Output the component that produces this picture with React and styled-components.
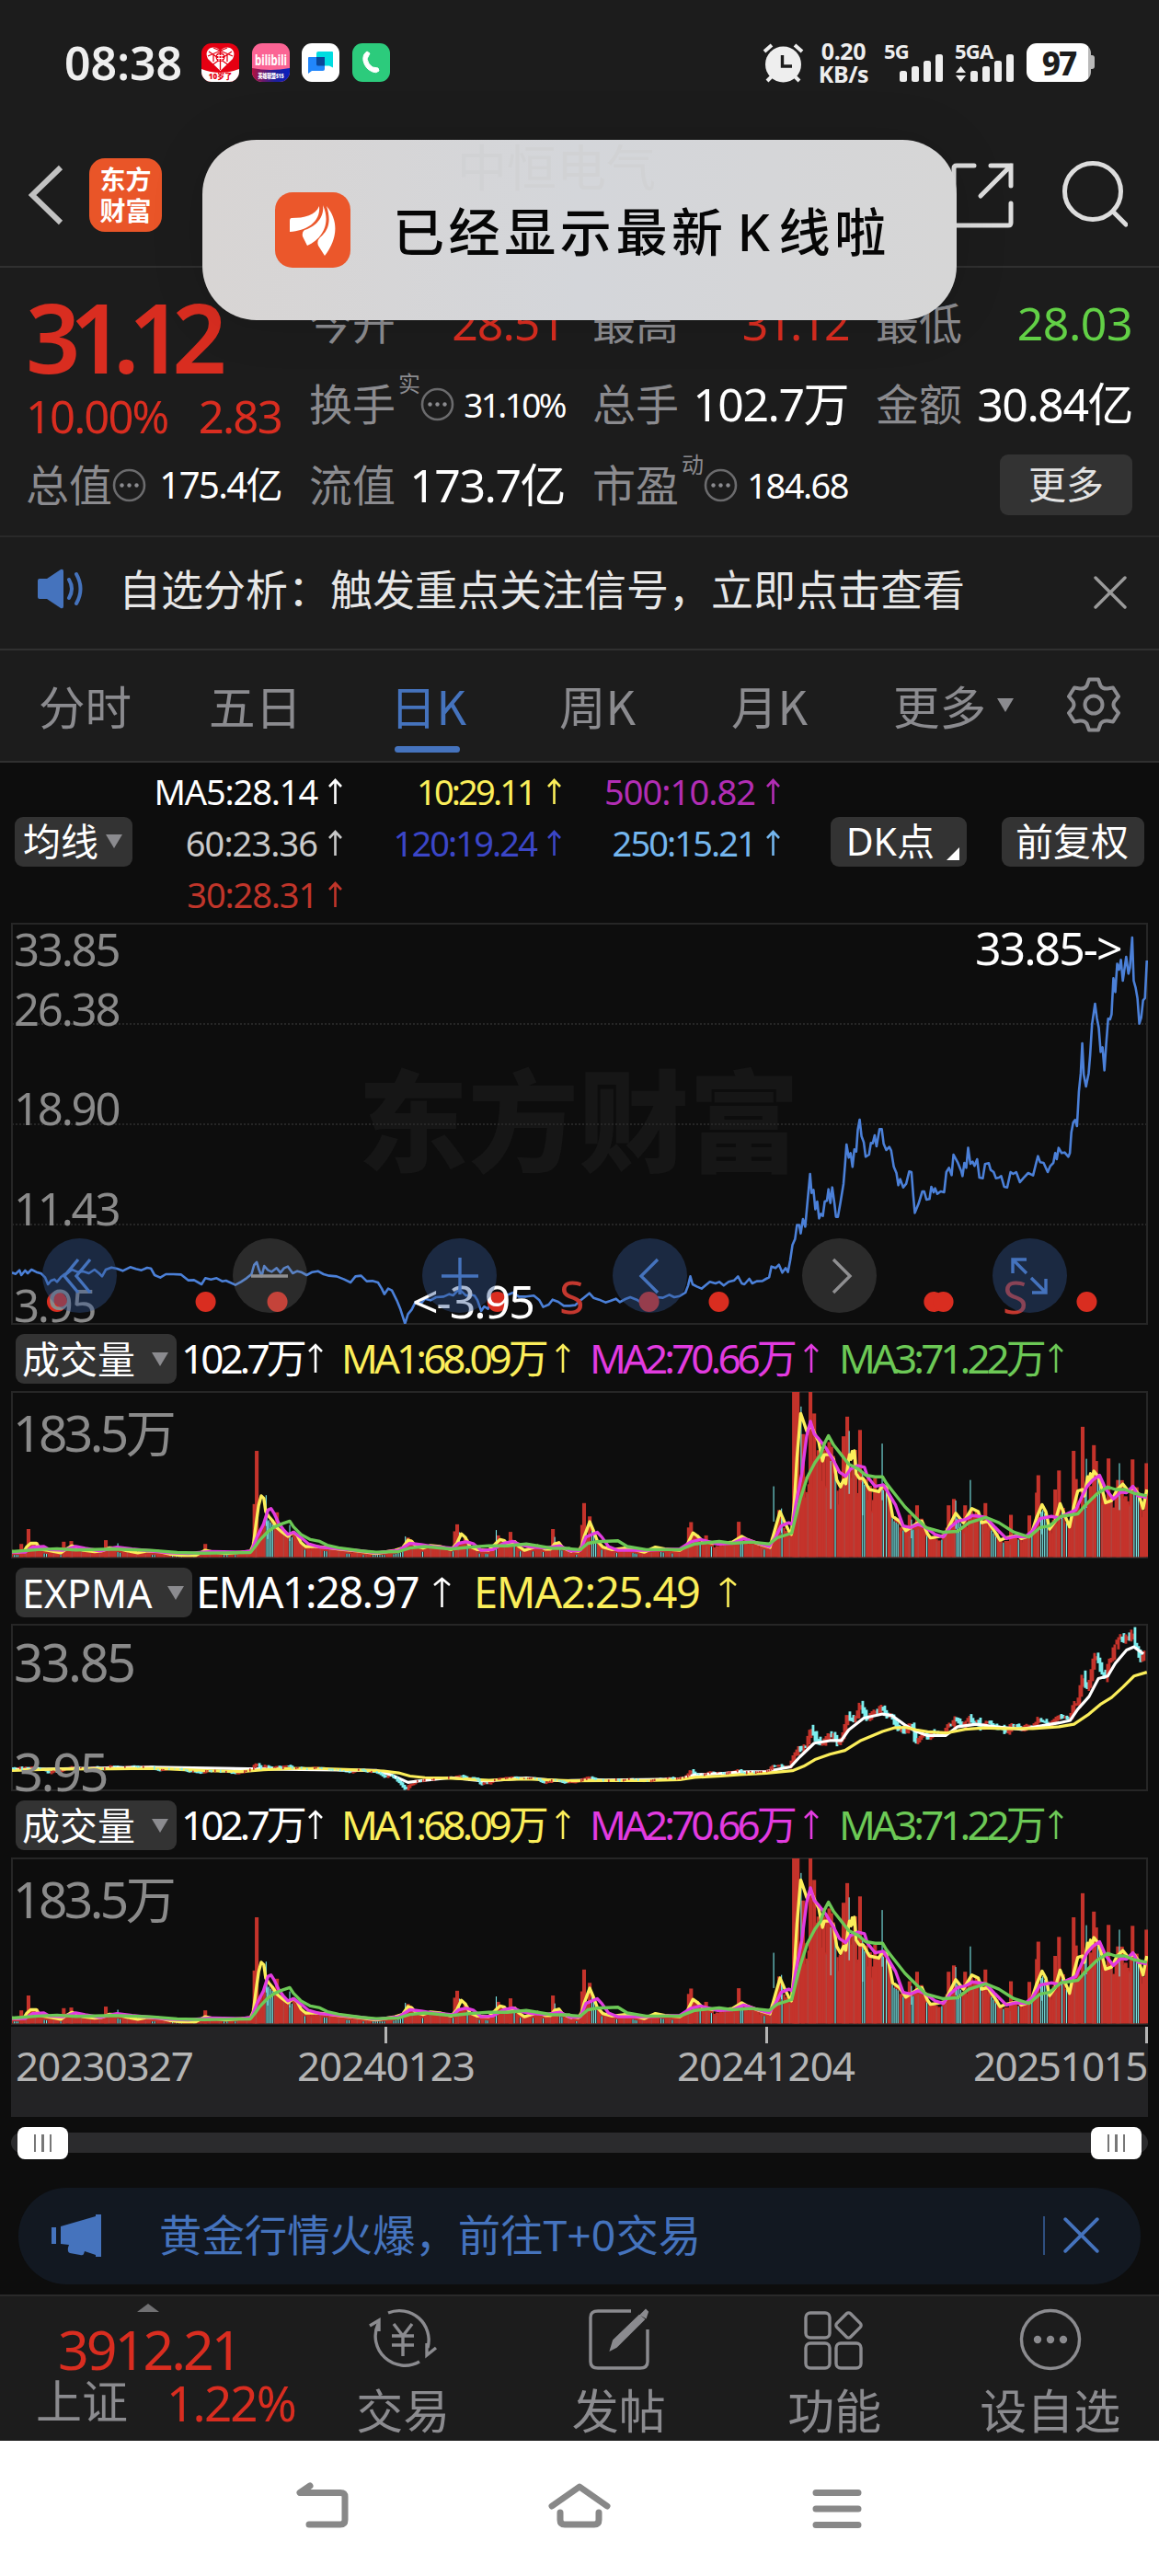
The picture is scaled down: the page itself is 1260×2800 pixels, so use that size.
import React from 'react';
import styled, { createGlobalStyle } from 'styled-components';

const GlobalStyle = createGlobalStyle`
  * {
    box-sizing: border-box;
  }

  body {
    margin: 0;
    background: #0d0d0d;
    font-family: 'Noto Sans', 'Noto Sans CJK SC', sans-serif;
  }

  svg {
    display: block;
    flex: none;
  }
`;

const colors = {
  red: '#d92d20',
  bar: '#c4332b',
  green: '#62d046',
  blue: '#4573bd',
  yellow: '#fbee5a',
  pink: '#e23be0',
  lime: '#6cc956',
  cyan: '#7deeee',
  label: '#8b8b8f',
};

/* ---------- chart data: the second half is stored from its own origin ---------- */

const HALF = 1519;
const parse = (text, shift = 0) =>
  text
    .trim()
    .split(/\s+/)
    .map((pair) => pair.split(',').map(Number))
    .map(([x, y]) => [x + shift, y]);
const series = (first, second) => [...parse(first), ...parse(second, HALF)];
const toPoints = (list) => list.map((p) => p.join(',')).join(' ');

const price = series(
  `30,1210 40,1214 50,1202 55,1218 65,1203 72,1212 82,1200 95,1208 108,1213 118,1225 126,1248 134,1236 143,1232 150,1240
  160,1225 170,1215 178,1212 190,1200 205,1208 220,1206 235,1212 250,1200 262,1212 270,1222 280,1200 295,1193 310,1197
  325,1204 345,1192 360,1198 375,1202 390,1194 400,1196 410,1218 425,1226 440,1215 460,1215 480,1216 500,1235 515,1234
  535,1248 545,1228 560,1232 575,1228 590,1238 600,1236 625,1250 640,1240 655,1228 668,1215 675,1185 682,1176 688,1200
  695,1222 702,1188 712,1202 722,1207 735,1195 745,1210 755,1195 765,1190 778,1212 790,1205 800,1208 815,1218 830,1208
  845,1205 860,1215 875,1220 895,1222 915,1232 932,1242 945,1222 960,1220 975,1238 990,1237 1005,1242 1015,1262
  1022,1280 1032,1262 1042,1268 1055,1300 1065,1330 1077,1376 1085,1345 1095,1330 1105,1305 1120,1310 1130,1295
  1145,1300 1160,1290 1180,1288 1195,1280 1205,1284 1216,1270 1225,1268 1240,1285 1250,1282 1262,1285 1270,1300
  1280,1335 1288,1320 1298,1328 1310,1300 1325,1290 1345,1285 1365,1275 1380,1288 1400,1288 1420,1285 1435,1300
  1445,1322 1460,1314 1470,1298 1485,1305 1500,1318 1515,1318 1530,1316 1545,1300`,
  `34,1292 49,1277 60,1292 75,1298 92,1307 105,1302 120,1295 130,1306 145,1296 158,1290 175,1298 185,1306 200,1310
  215,1305 228,1290 245,1292 262,1282 275,1290 290,1286 305,1275 312,1252 318,1222 324,1248 335,1255 348,1262 358,1252
  370,1240 385,1245 395,1240 407,1252 420,1240 435,1235 445,1222 455,1245 462,1248 475,1230 483,1245 495,1238 510,1237
  520,1230 528,1225 534,1190 545,1195 554,1184 563,1210 572,1195 578,1208 584,1170 590,1120 597,1100 602,1055 608,1055
  612,1082 618,1035 624,1060 630,980 637,888 641,950 646,940 651,1003 656,978 661,1033 666,1018 671,1025 676,978
  682,975 686,938 691,983 696,932 702,985 706,1028 711,1028 718,980 726,920 730,860 734,792 740,835 745,820 750,865
  755,808 760,815 764,745 769,711 774,765 780,785 785,832 794,825 799,787 804,788 809,762 814,798 822,742 828,742
  833,790 840,810 848,800 853,812 860,865 867,885 872,925 877,905 885,932 893,920 901,880 907,882 912,960 916,1015
  926,985 936,945 941,945 947,972 955,970 960,930 966,948 970,935 976,953 985,945 994,948 1000,882 1007,868 1014,892
  1019,825 1030,850 1040,880 1043,895 1048,852 1053,868 1058,803 1064,855 1070,848 1075,862 1082,840 1088,900 1097,902
  1103,856 1113,853 1118,875 1126,882 1132,902 1140,900 1146,895 1154,930 1162,932 1171,882 1178,888 1186,882 1196,915
  1205,902 1218,885 1231,893 1238,858 1244,830 1250,850 1259,852 1270,882 1277,862 1285,852 1290,820 1294,840 1299,803
  1307,820 1315,818 1325,832 1329,820 1333,752 1338,720 1343,712 1348,732 1353,620 1358,560 1362,462 1366,565 1372,603
  1379,560 1383,500 1388,400 1396,333 1401,380 1406,412 1411,490 1416,475 1421,550 1426,460 1431,382 1436,384 1440,368
  1445,250 1450,295 1455,203 1460,222 1465,190 1470,258 1479,180 1485,235 1489,215 1495,117 1499,258 1504,280 1509,315
  1514,398 1519,378 1524,322 1529,315 1534,192`
);

const volumeMa1 = series(
  `30,716 45,718 62,715 70,700 80,690 95,690 105,708 125,712 160,720 175,708 190,698 205,705 220,712 250,716 270,714
  290,704 310,705 330,712 365,720 390,714 420,716 450,724 480,728 520,728 545,712 560,716 600,722 640,718 665,715
  673,695 680,630 687,570 694,540 701,548 706,590 714,605 725,620 735,640 750,655 765,668 780,655 790,665 800,688
  812,700 835,700 860,702 900,708 950,714 1000,722 1050,712 1070,705 1085,680 1095,684 1105,698 1125,705 1145,697
  1170,700 1200,710 1215,690 1227,660 1238,672 1250,700 1270,710 1300,712 1315,695 1330,678 1342,682 1352,696
  1370,685 1380,700 1395,712 1415,705 1430,698 1450,708 1465,708 1475,692 1487,688 1497,704 1520,715`,
  `0,712 20,715 28,700 35,670 50,622 60,650 70,682 85,702 110,710 150,704 195,718 225,702 250,708 290,712 308,698
  325,657 338,668 350,682 380,690 405,690 430,686 455,668 470,678 500,692 530,703 545,640 557,590 568,620 580,650
  587,662 595,560 602,420 612,280 618,300 628,335 640,318 650,345 660,370 670,430 675,410 690,410 700,425 708,490
  718,512 726,490 732,502 738,435 742,410 746,425 749,400 752,420 755,398 760,470 768,485 778,485 795,520 820,527
  828,510 840,512 850,560 857,605 875,620 892,650 905,640 920,628 935,620 950,660 958,673 975,670 995,665 1010,630
  1025,595 1045,625 1068,580 1085,590 1095,625 1110,620 1130,655 1143,680 1160,672 1190,665 1200,675 1225,665
  1240,610 1255,568 1265,590 1275,645 1290,620 1303,565 1315,600 1328,638 1340,570 1350,525 1362,520 1368,540
  1376,480 1380,495 1384,470 1388,485 1393,462 1405,480 1415,520 1424,562 1440,555 1455,520 1470,503 1485,525
  1500,515 1512,535 1524,580 1534,520`
);

const volumeMa2 = series(
  `30,718 65,718 85,702 115,700 130,710 165,712 200,700 225,706 265,714 310,702 350,708 400,714 450,720 500,722
  560,716 640,718 668,714 682,672 700,630 712,585 720,580 728,595 740,625 752,645 765,662 780,655 800,672 820,692
  850,702 900,707 960,714 1000,720 1060,712 1090,690 1120,694 1150,700 1205,706 1220,690 1240,685 1260,692 1280,712
  1310,710 1340,690 1365,684 1385,695 1415,702 1450,705 1490,698 1518,714`,
  `0,714 25,712 40,670 70,655 82,670 100,700 125,712 200,712 290,708 320,685 345,678 390,692 430,690 460,675 500,690
  528,700 545,670 560,635 580,625 590,630 600,560 615,470 628,350 638,305 648,345 660,360 680,390 700,430 715,465
  732,478 745,455 765,445 782,450 790,480 810,510 832,505 845,530 865,570 885,635 905,640 925,630 945,640 970,662
  992,670 1010,640 1030,620 1050,615 1070,602 1105,608 1130,640 1160,675 1185,668 1210,670 1230,650 1250,612
  1280,605 1300,610 1325,595 1345,585 1360,545 1375,510 1390,490 1408,475 1425,520 1445,550 1465,528 1480,530
  1497,510 1510,540 1534,545`
);

const volumeMa3 = series(
  `30,716 100,710 150,707 200,711 300,708 400,712 470,719 540,721 600,720 665,719 678,700 690,680 710,655 730,638
  750,628 770,620 780,638 800,662 825,678 850,684 870,696 900,704 960,714 1000,718 1060,716 1090,705 1130,700
  1200,708 1250,702 1300,698 1350,698 1400,692 1430,698 1470,706 1515,706`,
  `0,708 25,710 45,690 70,685 125,682 150,700 200,710 290,710 330,692 395,684 430,690 480,686 528,692 550,672
  588,658 600,600 612,545 630,480 650,435 665,410 675,375 686,350 700,380 720,410 740,440 765,455 785,475 810,480
  830,480 840,500 860,530 890,575 915,605 945,640 990,655 1030,652 1060,625 1105,608 1140,625 1180,655 1220,670
  1250,640 1275,635 1305,605 1350,597 1370,570 1400,535 1430,512 1450,520 1475,520 1500,532 1534,540`
);

const redSpikes = series(
  `55,692 74,645 168,685 188,683 280,680 545,692 676,566 682,398 736,592 1210,652 1216,630 1085,672 1358,654
  1325,665 1471,645`,
  `30,632 35,563 50,605 314,640 320,623 447,622 360,665 594,212 599,212 604,212 638,212 648,280 618,345 688,370
  726,352 736,290 757,395 770,332 810,485 902,600 922,570 1006,570 1020,550 1050,570 1104,563 1172,600 1221,602
  1241,530 1245,475 1290,520 1300,460 1339,398 1345,487 1363,322 1393,380 1399,430 1432,422 1457,490 1496,425
  1533,437 555,585`
);

const thinSpikes = series(
  `312,690 707,538 711,620 770,632 1078,668 1222,655 1320,648 1476,670`,
  `540,510 561,580 613,258 692,430 741,335 777,470 829,375 907,615 1025,555 1064,490 1255,590 1373,423 1461,437`
);

const fallingDays = [
  ...[36, 41, 46, 116, 122, 160, 312, 318, 404, 410, 458, 468, 475, 482, 515, 595, 603, 625, 709, 714, 719, 724, 770,
    776, 810, 862, 868, 922, 928, 966, 992, 998, 1004, 1010, 1016, 1022, 1047, 1053, 1059, 1065, 1071, 1124, 1205,
    1243, 1275, 1292, 1297, 1320, 1368, 1384, 1418, 1445, 1490, 1495],
  ...[15, 56, 61, 66, 82, 122, 165, 170, 175, 240, 246, 270, 344, 374, 452, 457, 515, 562, 704, 777, 782, 832, 840,
    856, 861, 866, 871, 885, 908, 912, 948, 988, 1028, 1033, 1038, 1090, 1120, 1125, 1131, 1152, 1192, 1228, 1252,
    1257, 1262, 1268, 1308, 1320, 1370, 1403, 1408, 1500, 1506, 1511].map((x) => x + HALF),
];

const emaFast = series(
  `30,1406 400,1398 700,1404 1000,1408 1040,1422 1085,1446 1110,1442 1200,1431 1290,1442 1400,1432 1500,1442`,
  `0,1440 290,1436 330,1422 400,1418 450,1413 520,1412 585,1397 610,1365 648,1322 690,1314 720,1314 740,1280 780,1243
  830,1230 855,1235 890,1265 920,1285 950,1298 998,1298 1030,1270 1080,1262 1130,1270 1200,1278 1250,1268 1300,1258
  1330,1250 1350,1215 1380,1175 1405,1118 1430,1110 1450,1070 1480,1028 1500,1018 1525,1040`
);

const emaSlow = series(
  `30,1408 150,1404 300,1403 400,1402 440,1403 530,1408 640,1412 700,1406 780,1402 850,1402 950,1407 1020,1410
  1060,1416 1090,1426 1130,1431 1200,1433 1300,1439 1400,1435 1500,1440`,
  `0,1441 100,1440 200,1440 290,1437 330,1430 400,1426 450,1421 520,1417 590,1409 620,1395 650,1374 690,1357 730,1345
  770,1315 830,1285 860,1274 890,1272 920,1280 950,1286 1000,1290 1050,1278 1100,1274 1150,1276 1230,1276 1300,1270
  1340,1262 1380,1230 1410,1200 1440,1178 1470,1145 1500,1110 1534,1098`
);

const valueAt = (list, x) => {
  const i = list.findIndex((p) => p[0] >= x);
  if (i < 1) return i === 0 ? list[0][1] : list[list.length - 1][1];
  const [x0, y0] = list[i - 1];
  const [x1, y1] = list[i];
  return y0 + ((y1 - y0) * (x - x0)) / (x1 - x0 || 1);
};

const jitter = (n) => {
  const v = Math.sin(n * 12.9898) * 43758.5453;
  return v - Math.floor(v);
};

const FLOOR = 733;
const volumeBars = Array.from({ length: 616 }, (_, i) => {
  const x = 32 + i * 4.9;
  const mean = FLOOR - Math.max(valueAt(volumeMa1, x), valueAt(volumeMa3, x) - 30);
  return { x, y: FLOOR - mean * (0.68 + jitter(i) * 0.42) };
});

const candles = Array.from({ length: 616 }, (_, i) => {
  const x = 32 + i * 4.9;
  const map = (v) => 1470 - (1376 - v) * 0.413;
  const open = map(valueAt(price, x - 8));
  const close = map(valueAt(price, x));
  const wick = 2 + jitter(i + 9) * (x > 2100 ? 16 : 5);
  return {
    x,
    top: Math.max(Math.min(open, close) - wick / 2, 949),
    height: Math.abs(open - close) + wick,
    up: close < open || (close === open && jitter(i) > 0.4),
  };
});

/* ---------- shared parts ---------- */

const Num = styled.span`
  font-size: ${({ $size }) => $size}px;
  font-weight: ${({ $weight }) => $weight || 400};
  letter-spacing: ${({ $ls }) => ($ls === undefined ? -0.05 : $ls)}em;
  color: ${({ $color }) => $color || '#fff'};
  line-height: 1;
  white-space: nowrap;
`;

const Caret = styled.i`
  border: ${({ $w }) => ($w || 18) / 2}px solid transparent;
  border-top: ${({ $h }) => $h || 15}px solid ${colors.label};
  border-bottom: 0;
`;

const UpArrow = ({ w = 15, h = 28, gap = 12 }) => (
  <svg width={w + gap} height={h} viewBox={`${-gap} 0 ${w + gap} ${h}`} fill="none" stroke="currentColor" strokeWidth="2.6">
    <path d={`M${w / 2} ${h}V2M1 9L${w / 2} 2L${w - 1} 9`} />
  </svg>
);

const Cross = ({ size, color }) => (
  <svg width={size} height={size} viewBox="0 0 36 36" stroke={color} strokeWidth="3.4" strokeLinecap="round">
    <path d="M2 2L34 34M34 2L2 34" />
  </svg>
);

const Screen = styled.main`
  position: relative;
  width: 1260px;
  height: 2800px;
  overflow: hidden;
  display: flex;
  flex-direction: column;
  background: #0d0d0d;
  color: #fff;
`;

/* ---------- status bar ---------- */

const StatusBar = styled.header`
  height: 140px;
  flex: none;
  padding: 47px 70px 0 70px;
  display: flex;
  align-items: flex-start;
  justify-content: space-between;
  background: #1c1c1c;
`;

const StatusLeft = styled.div`
  display: flex;
  align-items: center;
  height: 42px;
`;

const Clock = styled(Num)`
  width: 149px;
`;

const AppIcons = styled.div`
  display: flex;
  gap: 13.5px;
`;

const StatusRight = styled.div`
  display: flex;
  height: 43px;
  color: #eee;
`;

const Speed = styled.div`
  width: 58px;
  margin-left: 14px;
  display: flex;
  flex-direction: column;
  align-items: center;
  font-size: 25px;
  font-weight: 700;
  line-height: 25px;
  margin-top: -4px;
  letter-spacing: -0.4px;
`;

const Signal = styled.div`
  width: ${({ $w }) => $w}px;
  margin-left: ${({ $gap }) => $gap}px;
  height: 42px;
  display: flex;
  flex-direction: column;
  font-size: 22px;
  font-weight: 700;
  line-height: 16px;
  letter-spacing: -0.8px;
  svg {
    align-self: flex-end;
    margin-top: -4px;
  }
`;

const Battery = styled.div`
  width: 70px;
  height: 42px;
  margin-left: 13px;
  border-radius: 11px;
  background: linear-gradient(90deg, #fff 67px, #b9b9b9 67px);
  color: #1c1c1c;
  display: flex;
  align-items: center;
  justify-content: center;
  font-size: 35px;
  font-weight: 800;
  letter-spacing: -2px;
  line-height: 1;
`;

const BatteryTip = styled.div`
  width: 4px;
  height: 15px;
  margin-top: 13px;
  border-radius: 0 3px 3px 0;
  background: #b9b9b9;
`;

const HeartApp = () => (
  <svg width="41" height="42" viewBox="0 0 41 42">
    <rect width="41" height="42" rx="11" fill="#e60012" />
    <path d="M0 28Q20 36 41 28V31A11 11 0 0 1 30 42H11A11 11 0 0 1 0 31Z" fill="#fff" />
    <path d="M20.500 30L7 17Q3 9 10 5Q16 3 20.500 8Q25 3 31 5Q38 9 34 17Z" fill="#fff" />
    <path d="M8 9L30 24M13 5L34 14M33 9L11 24M28 5L7 14M20.500 9V29M13 12V20M28 12V20" stroke="#e60012" strokeWidth="1.300" />
    <circle cx="20.500" cy="15" r="5" fill="#e60012" />
    <path d="M17 13.500H24M17 16.500H24M19 11.500V19M22 11.500V19" stroke="#fff" strokeWidth="1.100" />
    <text x="20.500" y="38.500" fontSize="8" fontWeight="900" textAnchor="middle" fill="#e60012">10岁了</text>
  </svg>
);

const VideoApp = () => (
  <svg width="41" height="42" viewBox="0 0 41 42">
    <defs>
      <linearGradient id="league">
        <stop offset="0" stopColor="#b3123f" />
        <stop offset="0.6" stopColor="#20209a" />
        <stop offset="1" stopColor="#0b1fc0" />
      </linearGradient>
    </defs>
    <rect width="41" height="42" rx="11" fill="#fb6494" />
    <path d="M0 27Q20 31 41 27V31A11 11 0 0 1 30 42H11A11 11 0 0 1 0 31Z" fill="url(#league)" />
    <text x="20.500" y="23.500" fontSize="16" fontWeight="700" textAnchor="middle" textLength="35" lengthAdjust="spacingAndGlyphs" fill="#fff">bilibili</text>
    <text x="20.500" y="37.500" fontSize="7" fontWeight="900" textAnchor="middle" textLength="28" lengthAdjust="spacingAndGlyphs" fill="#fff">英雄联盟S15</text>
  </svg>
);

const ChatApp = () => (
  <svg width="41" height="42" viewBox="0 0 41 42">
    <rect width="41" height="42" rx="11" fill="#fff" />
    <path d="M18 9H33Q34 9 34 10V26.500L30 24.500H18Q16 24.500 16 23V11Q16 9 18 9Z" fill="#00dce0" />
    <path d="M7 16Q7 15 8 15H25V28Q25 30 23 30H11L7 33Z" fill="#2186fb" />
    <path d="M16 15H25V24.500H18Q16 24.500 16 23Z" fill="#0a4699" />
  </svg>
);

const PhoneApp = () => (
  <svg width="41" height="42" viewBox="0 0 41 42">
    <rect width="41" height="42" rx="11" fill="#2ccb7c" />
    <path d="M16 9Q11 12 12 19Q14 28 22 31Q26 33 29 30L28 27L22 26Q17 23 16 17L19 11Z" fill="#fff" stroke="#fff" strokeLinejoin="round" />
  </svg>
);

const Alarm = () => (
  <svg width="45" height="43" viewBox="0 0 45 43">
    <circle cx="22.500" cy="23" r="19.500" fill="#eee" />
    <path d="M2 9L10 2M43 9L35 2M5 41L10 36M40 41L35 36" stroke="#eee" strokeWidth="4" />
    <path d="M21.500 13V25H32" fill="none" stroke="#1c1c1c" strokeWidth="3.400" />
  </svg>
);

const SignalBars = ({ data }) => (
  <svg width={data ? 65 : 48} height="30" viewBox={data ? '-17 0 65 30' : '0 0 48 30'} fill="#eee">
    {data && <path d="M-16 20L-10.500 13L-5 20ZM-16 23L-10.500 30L-5 23Z" />}
    <rect x="0" y="18" width="8" height="12" rx="2.500" />
    <rect x="13" y="13" width="8" height="17" rx="2.500" />
    <rect x="26" y="7" width="8" height="23" rx="2.500" />
    <rect x="39" y="0" width="8" height="30" rx="2.500" />
  </svg>
);

/* ---------- title bar and toast ---------- */

const TitleBar = styled.div`
  height: 151px;
  flex: none;
  padding: 32px 34px 0 31px;
  display: flex;
  align-items: flex-start;
  background: #1c1c1c;
  border-bottom: 2px solid #303030;
`;

const BrandBadge = styled.div`
  width: 79px;
  height: 80px;
  margin: 0 auto 0 28px;
  padding-top: 5px;
  border-radius: 17px;
  background: #e95528;
  color: #fff;
  text-align: center;
  font: 700 28px/34px 'Noto Sans CJK SC', sans-serif;
`;

const Toast = styled.div`
  position: absolute;
  left: 220px;
  top: 152px;
  width: 820px;
  height: 196px;
  padding: 0 70px 0 79px;
  border-radius: 59px;
  display: flex;
  align-items: center;
  background: linear-gradient(90deg, #d8d5d4, #d4d6da 50%, #d6d6d6);
  box-shadow: 0 0 60px rgba(0, 0, 0, 0.12);
  z-index: 2;
`;

const ToastText = styled.p`
  margin: 1px 0 0 46px;
  color: #060606;
  font-size: 56px;
  font-weight: 500;
  letter-spacing: 4.6px;
  white-space: nowrap;
  line-height: 1;
  b {
    margin: 0 5px 0 11px;
    font-weight: 500;
  }
`;

const Ghost = styled.span`
  position: absolute;
  left: 277px;
  top: 3px;
  font-size: 54px;
  line-height: 1;
  color: #d1d2d4;
`;

/* ---------- quote ---------- */

const Quote = styled.section`
  height: 293px;
  flex: none;
  padding: 16px 30px 0 28px;
  display: grid;
  grid-template-columns: repeat(3, 278px) 279px;
  grid-auto-rows: 88px;
  column-gap: 30px;
  background: #1c1c1c;
  border-bottom: 2px solid #292929;
`;

const Headline = styled.div`
  grid-row: span 2;
  display: flex;
  flex-direction: column;
  padding-top: 7px;
  gap: 10px;
`;

const Change = styled.div`
  display: flex;
  justify-content: space-between;
`;

const Cell = styled.div`
  display: flex;
  align-items: center;
  justify-content: space-between;
`;

const Label = styled.span`
  position: relative;
  display: flex;
  align-items: center;
  font-size: 47px;
  line-height: 1;
  color: ${colors.label};
  white-space: nowrap;
  sup {
    align-self: flex-start;
    font-size: 24px;
    line-height: 24px;
    margin: -11px 0 0 3px;
  }
`;

const MoreButton = styled.button`
  justify-self: end;
  align-self: center;
  width: 144px;
  height: 66px;
  padding: 0 0 5px;
  border: 0;
  border-radius: 9px;
  background: #333;
  color: #e2e2e2;
  font: 41px/1 'Noto Sans CJK SC', sans-serif;
`;

const InfoDot = () => (
  <svg width="37" height="37" viewBox="0 0 37 37">
    <circle cx="18.500" cy="18.500" r="16.500" fill="none" stroke="#6b6b6d" strokeWidth="2.600" />
    <g fill="#8b8b8f">
      <circle cx="10.500" cy="18.500" r="2.200" />
      <circle cx="18.500" cy="18.500" r="2.200" />
      <circle cx="26.500" cy="18.500" r="2.200" />
    </g>
  </svg>
);

/* ---------- notice and tabs ---------- */

const Notice = styled.section`
  height: 123px;
  flex: none;
  padding: 0 35px 10px 39px;
  display: flex;
  align-items: center;
  background: #1c1c1c;
  border-bottom: 2px solid #303030;
  font-size: 46px;
  line-height: 1;
  color: #e6e6e6;
  span {
    margin: 0 auto 0 36px;
  }
  span + svg {
    margin-top: 8px;
  }
`;

const Tabs = styled.nav`
  height: 122px;
  flex: none;
  padding: 0 41px 0 42px;
  display: grid;
  grid-template-columns: 185px 197px 184px 187px 176px 1fr auto;
  background: #1c1c1c;
  border-bottom: 2px solid #303030;
`;

const Tab = styled.div`
  position: relative;
  height: 120px;
  display: flex;
  align-items: center;
  gap: 12px;
  padding-bottom: 2px;
  font-size: 50.5px;
  font-family: 'Noto Sans CJK SC', sans-serif;
  color: ${({ $active }) => ($active ? colors.blue : colors.label)};
  &::after {
    content: '';
    display: ${({ $active }) => ($active ? 'block' : 'none')};
    position: absolute;
    left: 5px;
    bottom: 9px;
    width: 71px;
    height: 7px;
    border-radius: 4px;
    background: ${colors.blue};
  }
`;

/* ---------- indicators ---------- */

const Chip = styled.button`
  position: relative;
  justify-self: end;
  height: 54px;
  width: ${({ $w }) => $w}px;
  padding: 0 ${({ $pad }) => $pad || 9}px 0 ${({ $pad }) => ($pad || 9) - 2}px;
  border: 0;
  border-radius: 9px;
  background: #333;
  color: #fff;
  display: flex;
  align-items: center;
  justify-content: space-between;
  font: ${({ $size }) => $size || 41}px/1 'Noto Sans', 'Noto Sans CJK SC', sans-serif;
  letter-spacing: ${({ $ls }) => $ls || 0}px;
  white-space: nowrap;
`;

const Corner = styled.i`
  align-self: flex-end;
  margin-bottom: 7px;
  border-left: 14px solid transparent;
  border-bottom: 14px solid #fff;
`;

const Averages = styled.section`
  height: 174px;
  flex: none;
  padding: 0 16px 0 16px;
  display: grid;
  grid-template-columns: 128px 228px 238px 238px 203px 1fr;
  align-items: center;
  button {
    margin-top: -3px;
  }
`;

const AverageColumn = styled.div`
  height: 100%;
  padding-top: 3px;
  display: flex;
  flex-direction: column;
  align-items: flex-end;
`;

const Average = styled(Num)`
  height: 56px;
  display: flex;
  align-items: center;
`;

const Legend = styled.div`
  height: ${({ $h }) => $h}px;
  flex: none;
  padding: 10px 17px 0;
  display: flex;
  align-items: flex-start;
`;

const LegendItem = styled(Num)`
  height: 54px;
  width: ${({ $w }) => $w}px;
  margin-left: ${({ $gap }) => $gap || 0}px;
  padding-bottom: 2px;
  display: flex;
  align-items: center;
  justify-content: space-between;
`;

/* ---------- panels ---------- */

const Panel = styled.div`
  position: relative;
  height: ${({ $h }) => $h}px;
  flex: none;
  margin: 0 12px 0 12px;
  border: 2px solid #262626;
  > svg {
    position: absolute;
    inset: -1px;
    width: 1235px;
    height: ${({ $h }) => $h - 2}px;
  }
`;

const Mark = styled(Num)`
  position: absolute;
  left: ${({ $x }) => $x}px;
  top: ${({ $y }) => $y}px;
`;

const Watermark = styled.span`
  position: absolute;
  left: 375px;
  top: 154px;
  font-size: 120px;
  font-weight: 900;
  line-height: 1;
  color: #161616;
`;

const Controls = styled.div`
  position: absolute;
  left: 32px;
  right: 86px;
  bottom: 11px;
  display: flex;
  justify-content: space-between;
`;

const RoundButton = styled.button`
  width: 81px;
  height: 81px;
  padding: 0;
  border: 0;
  border-radius: 50%;
  display: grid;
  place-items: center;
  background: ${({ $muted }) => ($muted ? 'rgba(137,137,137,.25)' : 'rgba(50,85,145,.4)')};
  color: ${({ $muted }) => ($muted ? '#8f8f91' : colors.blue)};
`;

const controls = [
  { d: 'M18 2L3 20L18 38M31 2L16 20L31 38' },
  { d: 'M0 20H40', muted: true },
  { d: 'M0 20H40M20 0V40' },
  { d: 'M29 2L11 20L29 38' },
  { d: 'M13 2L31 20L13 38', muted: true },
  { d: 'M2 17V2H17M3 3L17 17M38 23V38H23M37 37L22 22' },
];

const scale = [
  { text: '33.85', y: 2 },
  { text: '26.38', y: 67 },
  { text: '18.90', y: 175 },
  { text: '11.43', y: 284 },
  { text: '3.95', y: 389 },
];

const PriceChart = () => (
  <Panel $h={437}>
    <Watermark>东方财富</Watermark>
    <svg viewBox="30 72 3026 1305" preserveAspectRatio="none">
      {[399, 726, 1053].map((y) => (
        <line key={y} x1="30" x2="3056" y1={y} y2={y} stroke="#262626" strokeWidth="2" strokeDasharray="2 2" vectorEffect="non-scaling-stroke" />
      ))}
      <polyline points={toPoints(price)} fill="none" stroke="#4b80d8" strokeWidth="2.600" strokeLinejoin="round" vectorEffect="non-scaling-stroke" />
      {[150, 546, 737, 1323, 1727, 1913, 2486, 2511, 2893].map((x) => (
        <ellipse key={x} cx={x} cy="1305" rx="27" ry="33" fill={colors.red} />
      ))}
    </svg>
    {scale.map(({ text, y }) => (
      <Mark key={text} $x={1} $y={y} $size={49} $ls={-0.045} $color="#8a8a8a">{text}</Mark>
    ))}
    <Mark $x={1046} $y={0} $size={50} $ls={-0.04}>{'33.85->'}</Mark>
    <Mark $x={434} $y={384} $size={50} $ls={-0.04}>{'<-3.95'}</Mark>
    <Mark $x={594} $y={379} $size={50} $color="#c4382f">S</Mark>
    <Mark $x={1076} $y={379} $size={50} $color="#c4382f">S</Mark>
    <Controls>
      {controls.map(({ d, muted }) => (
        <RoundButton key={d} $muted={muted}>
          <svg width="40" height="40" viewBox="0 0 40 40" fill="none" stroke="currentColor" strokeWidth="3.400">
            <path d={d} />
          </svg>
        </RoundButton>
      ))}
    </Controls>
  </Panel>
);

const VolumeChart = () => (
  <Panel $h={182}>
    <svg viewBox="30 212 3026 523" preserveAspectRatio="none">
      {volumeBars.map((b) => (
        <rect key={b.x} x={b.x - 5} y={b.y} width="10" height={FLOOR - b.y} fill={colors.bar} />
      ))}
      {redSpikes.map(([x, y]) => (
        <rect key={x} x={x - 5} y={y} width="10" height={FLOOR - y} fill={colors.bar} />
      ))}
      {volumeBars.filter((b, i) => i % 5 === 2).map((b) => (
        <rect key={b.x} x={b.x} y={b.y + 6} width="2" height={Math.max(FLOOR - b.y - 6, 0)} fill="#a05550" />
      ))}
      {fallingDays.map((x) => {
        const y = Math.min(valueAt(volumeMa1, x) + 12, 727);
        return (
          <g key={x}>
            <rect x={x - 3} y={y} width="6" height={FLOOR - y} fill="#0d0d0d" />
            <rect x={x - 1.5} y={y} width="3" height={FLOOR - y} fill={colors.cyan} />
          </g>
        );
      })}
      {thinSpikes.map(([x, y]) => (
        <rect key={x} x={x - 1.3} y={y} width="2.600" height={(FLOOR - y) * 0.5} fill={colors.cyan} />
      ))}
      {[[volumeMa1, colors.yellow], [volumeMa2, colors.pink], [volumeMa3, colors.lime]].map(([list, color]) => (
        <polyline key={color} points={toPoints(list)} fill="none" stroke={color} strokeWidth="3.400" strokeLinejoin="round" vectorEffect="non-scaling-stroke" />
      ))}
    </svg>
    <Mark $x={0} $y={15} $size={55} $ls={-0.065} $color="#8a8a8a">183.5万</Mark>
  </Panel>
);

const ExpmaChart = () => (
  <Panel $h={182}>
    <svg viewBox="30 948 3026 523" preserveAspectRatio="none">
      {candles.map((c) => (
        <rect key={c.x} x={c.x - 3} y={c.top} width="7" height={c.height} fill={c.up ? colors.bar : colors.cyan} />
      ))}
      {[[emaFast, '#fff'], [emaSlow, colors.yellow]].map(([list, color]) => (
        <polyline key={color} points={toPoints(list)} fill="none" stroke={color} strokeWidth="3.200" strokeLinejoin="round" vectorEffect="non-scaling-stroke" />
      ))}
      {candles.filter((c, i) => c.x < 2080 && jitter(i + 40) > 0.55).map((c) => (
        <rect key={c.x} x={c.x - 2} y={c.top} width="4" height={c.height} fill={c.up ? colors.bar : colors.cyan} />
      ))}
    </svg>
    <Mark $x={1} $y={11} $size={56} $ls={-0.045} $color="#8a8a8a">33.85</Mark>
    <Mark $x={1} $y={130} $size={56} $ls={-0.045} $color="#8a8a8a">3.95</Mark>
  </Panel>
);

const volumeItems = [
  { text: '102.7万', gap: 5, w: 154, color: '#fff', ls: -0.09 },
  { text: 'MA1:68.09万', gap: 20, w: 249, color: colors.yellow },
  { text: 'MA2:70.66万', gap: 21, w: 249, color: colors.pink },
  { text: 'MA3:71.22万', gap: 22, w: 244, color: colors.lime },
];

const VolumeLegend = ({ h }) => (
  <Legend $h={h}>
    <Chip $w={175}>成交量<Caret /></Chip>
    {volumeItems.map(({ text, gap, w, color, ls }) => (
      <LegendItem key={text} $gap={gap} $w={w} $size={44} $ls={ls || -0.09} $color={color}>
        {text}
        <UpArrow gap={0} w={16} h={32} />
      </LegendItem>
    ))}
  </Legend>
);

/* ---------- date axis, slider, promo ---------- */

const Axis = styled.div`
  height: 98px;
  flex: none;
  margin: 2px 12px 0;
  padding: 0 0 0 5px;
  position: relative;
  display: flex;
  background: #232325;
`;

const AxisDate = styled(Num)`
  width: ${({ $w }) => $w}px;
  padding-top: 20px;
  text-align: ${({ $right }) => ($right ? 'right' : 'left')};
`;

const Tick = styled.i`
  position: absolute;
  top: 0;
  left: ${({ $x }) => $x}px;
  width: 3px;
  height: 18px;
  background: #b4b4b4;
`;

const Slider = styled.div`
  height: 22px;
  flex: none;
  margin: 17px 12px 0;
  padding: 0 7px;
  border-radius: 11px;
  background: #2b2b2d;
  display: flex;
  align-items: center;
  justify-content: space-between;
`;

const Handle = styled.div`
  width: 55px;
  height: 35px;
  border-radius: 8px;
  background: #fff;
  display: flex;
  align-items: center;
  justify-content: center;
  gap: 6px;
  i {
    width: 2.5px;
    height: 19px;
    background: #777;
  }
`;

const Promo = styled.div`
  height: 105px;
  flex: none;
  margin: 38px 20px 11px;
  padding: 0 45px 2px 36px;
  border-radius: 52px;
  background: #121821;
  color: ${colors.blue};
  display: flex;
  align-items: center;
  font-size: 46.4px;
  line-height: 1;
  span {
    margin: 0 auto 0 62px;
  }
`;

const Divider = styled.i`
  width: 2px;
  height: 42px;
  margin-right: 20px;
  background: #2f4f80;
`;

/* ---------- bottom bars ---------- */

const BottomBar = styled.footer`
  height: 159px;
  flex: none;
  padding-left: 30px;
  display: grid;
  grid-template-columns: 291px repeat(4, 234.5px);
  background: #1c1c1c;
  border-top: 2px solid #2a2a2a;
`;

const IndexBox = styled.div`
  display: flex;
  flex-direction: column;
  padding: 8px 0 0 9px;
`;

const IndexCaret = styled.i`
  margin-left: 110px;
  width: 0;
  border: 12px solid transparent;
  border-top: 0;
  border-bottom: 9px solid #707072;
`;

const IndexValue = styled(Num)`
  margin: 11px 0 2px 24px;
`;

const IndexRow = styled.div`
  display: flex;
  justify-content: space-between;
  font-size: 50px;
  line-height: 1;
  color: ${colors.label};
`;

const Action = styled.div`
  display: flex;
  flex-direction: column;
  align-items: center;
  padding-top: 8px;
  font-size: 51px;
  line-height: 1;
  color: ${colors.label};
  svg {
    margin-bottom: 13px;
  }
`;

const actions = [
  {
    name: '交易',
    icon: (
      <>
        <path d="M23 10A32 32 0 0 1 66 48M57 63A32 32 0 0 1 12 22M3 24L13 18V30M75 48L65 56V43" />
        <path d="M29 22L39 35L49 22M27 35H51M27 45H51M39 35V57" />
      </>
    ),
  },
  {
    name: '发帖',
    icon: (
      <>
        <path d="M52 8H16Q8 8 8 15V63Q8 70 16 70H62Q70 70 70 63V28" />
        <path d="M30 50L33 40L61 13L66 17L36 47ZM63 12L68 7L70 9L68 15Z" fill="currentColor" strokeWidth="2" />
      </>
    ),
  },
  {
    name: '功能',
    icon: (
      <>
        <rect x="8" y="10" width="26" height="27" rx="5" />
        <rect x="8" y="43" width="26" height="27" rx="5" />
        <rect x="41" y="43" width="27" height="27" rx="5" />
        <rect x="44" y="13" width="21" height="21" rx="3" transform="rotate(45 54.500 23.500)" />
      </>
    ),
  },
  {
    name: '设自选',
    icon: (
      <>
        <circle cx="39" cy="39" r="31.500" />
        <circle cx="25" cy="39" r="2.500" fill="currentColor" />
        <circle cx="39" cy="39" r="2.500" fill="currentColor" />
        <circle cx="53" cy="39" r="2.500" fill="currentColor" />
      </>
    ),
  },
];

const SystemNav = styled.div`
  flex: 1;
  padding: 45px 323px 0 322px;
  display: flex;
  background: #fff;
  svg + svg {
    margin-left: 216px;
  }
  svg + svg + svg {
    margin-left: 219px;
  }
`;

const App = () => (
  <Screen>
    <GlobalStyle />
    <StatusBar>
      <StatusLeft>
        <Clock $size={50} $weight={600} $ls={0} $color="#eee">08:38</Clock>
        <AppIcons>
          <HeartApp />
          <VideoApp />
          <ChatApp />
          <PhoneApp />
        </AppIcons>
      </StatusLeft>
      <StatusRight>
        <Alarm />
        <Speed><span>0.20</span><span>KB/s</span></Speed>
        <Signal $w={65} $gap={15}>5G<SignalBars /></Signal>
        <Signal $w={65} $gap={12}>5GA<SignalBars data /></Signal>
        <Battery>97</Battery>
        <BatteryTip />
      </StatusRight>
    </StatusBar>

    <TitleBar>
      <svg width="38" height="80" viewBox="0 0 38 80" fill="none" stroke="#c2c2c2" strokeWidth="6">
        <path d="M35 10L4 40L35 70" />
      </svg>
      <BrandBadge>东方<br />财富</BrandBadge>
      <svg width="70" height="80" viewBox="0 0 70 80" fill="none" stroke="#ddd" strokeWidth="5" strokeLinecap="round">
        <path d="M25 8H6Q3 8 3 11V71Q3 73 6 73H62Q65 73 65 70V49M43 8H65V30M65 8L32 41" />
      </svg>
      <svg width="122" height="80" viewBox="-52 0 122 80" fill="none" stroke="#ddd" strokeWidth="5" strokeLinecap="round">
        <circle cx="32" cy="36" r="30.500" />
        <path d="M54 58L68 72" />
      </svg>
    </TitleBar>

    <Toast>
      <Ghost>中恒电气</Ghost>
      <svg width="82" height="82" viewBox="0 0 82 82">
        <rect width="82" height="82" rx="19" fill="#eb572b" />
        <path d="M48 15C44 25 32 28 18 28Q16 28 16 31V43C33 42 50 33 48 15Z" fill="#fff" />
        <path d="M52 14C54 28 43 38 32 41Q29 43 30 48L35 58C49 52 62 36 52 14Z" fill="#fff" />
        <path d="M56 15C61 30 59 41 49 49Q45 53 47 58L54 69C65 55 72 34 56 15Z" fill="#fff" />
      </svg>
      <ToastText>已经显示最新<b>K</b>线啦</ToastText>
    </Toast>

    <Quote>
      <Headline>
        <Num $size={104} $weight={600} $ls={-0.115} $color={colors.red}>31.12</Num>
        <Change>
          <Num $size={49} $ls={-0.04} $color={colors.red}>10.00%</Num>
          <Num $size={49} $ls={-0.035} $color={colors.red}>2.83</Num>
        </Change>
      </Headline>
      <Cell><Label>今开</Label><Num $size={50} $ls={-0.02} $color={colors.red}>28.51</Num></Cell>
      <Cell><Label>最高</Label><Num $size={50} $color={colors.red}>31.12</Num></Cell>
      <Cell><Label>最低</Label><Num $size={50} $ls={-0.01} $color={colors.green}>28.03</Num></Cell>
      <Cell><Label>换手<sup>实</sup><InfoDot /></Label><Num $size={37} $ls={-0.07}>31.10%</Num></Cell>
      <Cell><Label>总手</Label><Num $size={50} $ls={-0.03}>102.7万</Num></Cell>
      <Cell><Label>金额</Label><Num $size={50} $ls={-0.03}>30.84亿</Num></Cell>
      <Cell><Label>总值<InfoDot /></Label><Num $size={40} $ls={-0.04}>175.4亿</Num></Cell>
      <Cell><Label>流值</Label><Num $size={50} $ls={-0.03}>173.7亿</Num></Cell>
      <Cell><Label>市盈<sup>动</sup><InfoDot /></Label><Num $size={38} $ls={-0.04}>184.68</Num></Cell>
      <MoreButton>更多</MoreButton>
    </Quote>

    <Notice>
      <svg width="54" height="44" viewBox="0 0 54 44">
        <path d="M2 13Q2 11 4 11H12L27 1Q30 0 30 3V41Q30 44 27 43L12 33H4Q2 33 2 31Z" fill={colors.blue} />
        <path d="M36 12Q42 22 36 32M44 6Q53 22 44 38" fill="none" stroke={colors.blue} strokeWidth="4" strokeLinecap="round" />
      </svg>
      <span>自选分析：触发重点关注信号，立即点击查看</span>
      <Cross size={36} color="#9a9a9a" />
    </Notice>

    <Tabs>
      <Tab>分时</Tab>
      <Tab>五日</Tab>
      <Tab $active>日K</Tab>
      <Tab>周K</Tab>
      <Tab>月K</Tab>
      <Tab>更多<Caret /></Tab>
      <Tab>
        <svg width="60" height="60" viewBox="0 0 60 60" fill="none" stroke={colors.label} strokeWidth="4" strokeLinejoin="round">
          <path d="M25 2.500H35L37.500 9.500Q40 13 45 12.500L51 11.500L57 21L52.500 26.500Q50.500 30 52.500 33.500L57 39L51 48.500L45 47.500Q40 47 37.500 50.500L35 57.500H25L22.500 50.500Q20 47 15 47.500L9 48.500L3 39L7.500 33.500Q9.500 30 7.500 26.500L3 21L9 11.500L15 12.500Q20 13 22.500 9.500Z" />
          <circle cx="30" cy="30" r="9.500" />
        </svg>
      </Tab>
    </Tabs>

    <Averages>
      <Chip $w={128} $pad={11}>均线<Caret /></Chip>
      <AverageColumn>
        <Average $size={38} $ls={-0.03}>MA5:28.14<UpArrow /></Average>
        <Average $size={38} $ls={-0.025} $color="#c9c9c9">60:23.36<UpArrow /></Average>
        <Average $size={38} $ls={-0.03} $color="#c0352a">30:28.31<UpArrow /></Average>
      </AverageColumn>
      <AverageColumn>
        <Average $size={38} $ls={-0.075} $color={colors.yellow}>10:29.11<UpArrow gap={14} /></Average>
        <Average $size={38} $color="#3b46c8">120:19.24<UpArrow /></Average>
      </AverageColumn>
      <AverageColumn>
        <Average $size={38} $ls={-0.025} $color="#b22db4">500:10.82<UpArrow /></Average>
        <Average $size={38} $color="#74b6ee">250:15.21<UpArrow /></Average>
      </AverageColumn>
      <Chip $w={148} $pad={8}><span>&nbsp;DK点</span><Corner /></Chip>
      <Chip $w={155} $pad={17}>前复权</Chip>
    </Averages>

    <PriceChart />
    <VolumeLegend h={72} />
    <VolumeChart />
    <Legend $h={71}>
      <Chip $w={192} $size={43}>EXPMA<Caret /></Chip>
      <LegendItem $gap={4} $w={277} $size={47} $ls={-0.035}>EMA1:28.97<UpArrow gap={0} w={19} h={33} /></LegendItem>
      <LegendItem $gap={25} $w={286} $size={47} $ls={-0.027} $color={colors.yellow}>EMA2:25.49<UpArrow gap={0} w={19} h={33} /></LegendItem>
    </Legend>
    <ExpmaChart />
    <VolumeLegend h={72} />
    <VolumeChart />

    <Axis>
      <AxisDate $w={306} $size={44} $ls={-0.024} $color="#b4b4b4">20230327</AxisDate>
      <AxisDate $w={413} $size={44} $ls={-0.024} $color="#b4b4b4">20240123</AxisDate>
      <AxisDate $w={200} $size={44} $ls={-0.024} $color="#b4b4b4">20241204</AxisDate>
      <AxisDate $w={311} $size={44} $ls={-0.035} $color="#b4b4b4" $right>20251015</AxisDate>
      <Tick $x={406} />
      <Tick $x={820} />
      <Tick $x={1233} />
    </Axis>
    <Slider>
      <Handle><i /><i /><i /></Handle>
      <Handle><i /><i /><i /></Handle>
    </Slider>

    <Promo>
      <svg width="55" height="48" viewBox="0 0 55 48" fill={colors.blue}>
        <path d="M0 15H5V33H0ZM10 14L48 3V1H54V47H48V45L36 41L35 44Q34 46 31 45L20 43Q17 42 18 37L19 34L10 33Z" />
      </svg>
      <span>黄金行情火爆，前往T+0交易</span>
      <Divider />
      <Cross size={39} color={colors.blue} />
    </Promo>

    <BottomBar>
      <IndexBox>
        <IndexCaret />
        <IndexValue $size={59} $color={colors.red}>3912.21</IndexValue>
        <IndexRow>上证<Num $size={53} $ls={-0.035} $color={colors.red}>1.22%</Num></IndexRow>
      </IndexBox>
      {actions.map(({ name, icon }) => (
        <Action key={name}>
          <svg width="78" height="78" viewBox="0 0 78 78" fill="none" stroke="currentColor" strokeWidth="3.400">{icon}</svg>
          {name}
        </Action>
      ))}
    </BottomBar>

    <SystemNav>
      <svg width="58" height="52" viewBox="0 0 58 52" fill="none" stroke="#888" strokeWidth="7" strokeLinecap="round" strokeLinejoin="round">
        <path d="M15 4L4 11.500H48Q53 11.500 53 16V41Q53 46 48 46H14" />
      </svg>
      <svg width="68" height="52" viewBox="0 0 68 52" fill="none" stroke="#888" strokeWidth="7" strokeLinecap="round" strokeLinejoin="round">
        <path d="M4 26L34 5L64 26M13 33V41Q13 46 18 46H50Q55 46 55 41V33" />
      </svg>
      <svg width="54" height="52" viewBox="0 0 54 52" stroke="#888" strokeWidth="7" strokeLinecap="round">
        <path d="M4 11.500H50M4 29H50M4 46.500H50" />
      </svg>
    </SystemNav>
  </Screen>
);

export default App;
